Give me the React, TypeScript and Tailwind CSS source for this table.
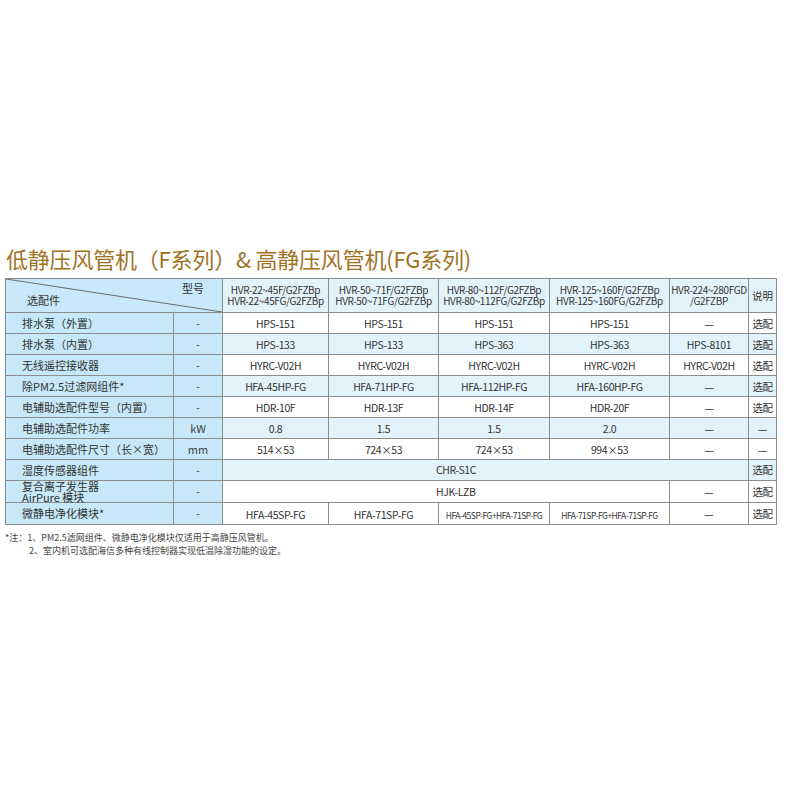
import React from 'react'

const font = { fontFamily: '"Noto Sans CJK SC", "Noto Sans", sans-serif' }

const models = [
  ['HVR-22~45F/G2FZBp', 'HVR-22~45FG/G2FZBp'],
  ['HVR-50~71F/G2FZBp', 'HVR-50~71FG/G2FZBp'],
  ['HVR-80~112F/G2FZBp', 'HVR-80~112FG/G2FZBp'],
  ['HVR-125~160F/G2FZBp', 'HVR-125~160FG/G2FZBp'],
  ['HVR-224~280FGD', '/G2FZBP'],
]

type Row = { name: React.ReactNode; unit: string; cells: string[]; note: string; tint: boolean }

const rows: Row[] = [
  { name: '排水泵（外置）', unit: '-', cells: ['HPS-151', 'HPS-151', 'HPS-151', 'HPS-151', '—'], note: '选配', tint: false },
  { name: '排水泵（内置）', unit: '-', cells: ['HPS-133', 'HPS-133', 'HPS-363', 'HPS-363', 'HPS-8101'], note: '选配', tint: true },
  { name: '无线遥控接收器', unit: '-', cells: ['HYRC-V02H', 'HYRC-V02H', 'HYRC-V02H', 'HYRC-V02H', 'HYRC-V02H'], note: '选配', tint: false },
  { name: '除PM2.5过滤网组件*', unit: '-', cells: ['HFA-45HP-FG', 'HFA-71HP-FG', 'HFA-112HP-FG', 'HFA-160HP-FG', '—'], note: '选配', tint: true },
  { name: '电辅助选配件型号（内置）', unit: '-', cells: ['HDR-10F', 'HDR-13F', 'HDR-14F', 'HDR-20F', '—'], note: '选配', tint: false },
  { name: '电辅助选配件功率', unit: 'kW', cells: ['0.8', '1.5', '1.5', '2.0', '—'], note: '—', tint: true },
  { name: '电辅助选配件尺寸（长×宽）', unit: 'mm', cells: ['514×53', '724×53', '724×53', '994×53', '—'], note: '—', tint: false },
]

const bd = 'border border-[#8c8c8c]'
const blue = 'bg-[#c7e8f8]'
const light = 'bg-[#e3f3fb]'

function NameCells({ name, unit, h }: { name: React.ReactNode; unit: string; h: string }) {
  return (
    <>
      <td className={`${bd} ${blue} ${h} pl-[16px] text-left text-[11px] leading-[11px] text-[#333]`}>{name}</td>
      <td className={`${bd} ${blue} text-center text-[11px] text-[#444]`}>{unit}</td>
    </>
  )
}

export default function App() {
  return (
    <div className="w-[800px] h-[800px] bg-white pt-[243px] pl-[5px]" style={font}>
      <h1 className="text-[22px] leading-[30px] text-[#9f721f] pl-[1px] tracking-[-0.2px]">
        低静压风管机（F系列）& 高静压风管机(FG系列)
      </h1>
      <table className="mt-[5px] w-[771px] table-fixed border-collapse text-[#333]">
        <colgroup>
          <col className="w-[168px]" />
          <col className="w-[49px]" />
          <col className="w-[106px]" />
          <col className="w-[110px]" />
          <col className="w-[111px]" />
          <col className="w-[120px]" />
          <col className="w-[79px]" />
          <col className="w-[28px]" />
        </colgroup>
        <tbody>
          <tr className="h-[34px]">
            <td colSpan={2} className={`${bd} ${blue} relative p-0`}>
              <svg className="absolute inset-0 w-full h-full" preserveAspectRatio="none" viewBox="0 0 100 100">
                <line x1="0" y1="0" x2="100" y2="100" stroke="#6b6b6b" strokeWidth="1" vectorEffect="non-scaling-stroke" />
              </svg>
              <span className="absolute left-[21px] top-[15px] text-[11px] leading-[12px]">选配件</span>
              <span className="absolute left-[176px] top-[3px] text-[11px] leading-[12px]">型号</span>
            </td>
            {models.map((m, i) => (
              <td key={i} className={`${bd} ${light} text-center whitespace-nowrap text-[10px] leading-[10.5px] tracking-[-0.35px] text-[#333]`}>
                <div>{m[0]}</div>
                <div>{m[1]}</div>
              </td>
            ))}
            <td className={`${bd} ${light} text-center text-[10.5px]`}>说明</td>
          </tr>
          {rows.map((r, i) => (
            <tr key={i} className="h-[21px]">
              <NameCells name={r.name} unit={r.unit} h="h-[21px]" />
              {r.cells.map((c, j) => (
                <td key={j} className={`${bd} ${r.tint ? light : 'bg-white'} text-center text-[10.5px] leading-[11px] tracking-[-0.4px]`}>
                  {c}
                </td>
              ))}
              <td className={`${bd} ${r.tint ? light : 'bg-white'} text-center text-[10.5px] leading-[11px] tracking-[-0.5px]`}>{r.note}</td>
            </tr>
          ))}
          <tr className="h-[21px]">
            <NameCells name="湿度传感器组件" unit="-" h="h-[21px]" />
            <td colSpan={5} className={`${bd} ${light} pl-[213px] text-left text-[10.5px] tracking-[-0.4px]`}>CHR-S1C</td>
            <td className={`${bd} ${light} text-center text-[10.5px] tracking-[-0.5px]`}>选配</td>
          </tr>
          <tr className="h-[22px]">
            <NameCells
              name={
                <div className="leading-[10.5px]">
                  <div>复合离子发生器</div>
                  <div>AirPure 模块</div>
                </div>
              }
              unit="-"
              h="h-[22px]"
            />
            <td colSpan={4} className={`${bd} bg-white pl-[213px] text-left text-[10.5px] tracking-[-0.4px]`}>HJK-LZB</td>
            <td className={`${bd} bg-white text-center text-[10.5px]`}>—</td>
            <td className={`${bd} bg-white text-center text-[10.5px] tracking-[-0.5px]`}>选配</td>
          </tr>
          <tr className="h-[22px]">
            <NameCells name="微静电净化模块*" unit="-" h="h-[22px]" />
            <td className={`${bd} bg-white text-center text-[10.5px] tracking-[-0.4px] pt-[3px]`}>HFA-45SP-FG</td>
            <td className={`${bd} bg-white text-center text-[10.5px] tracking-[-0.4px] pt-[3px]`}>HFA-71SP-FG</td>
            <td className={`${bd} bg-white text-center text-[8.5px] tracking-[-0.5px] pt-[3px]`}>HFA-45SP-FG+HFA-71SP-FG</td>
            <td className={`${bd} bg-white text-center text-[8.5px] tracking-[-0.5px] pt-[3px]`}>HFA-71SP-FG+HFA-71SP-FG</td>
            <td className={`${bd} bg-white text-center text-[10.5px]`}>—</td>
            <td className={`${bd} bg-white text-center text-[10.5px] tracking-[-0.5px]`}>选配</td>
          </tr>
        </tbody>
      </table>
      <div className="mt-[6px] text-[9px] leading-[13px] text-[#444]">
        <div>*注：1、PM2.5滤网组件、微静电净化模块仅适用于高静压风管机。</div>
        <div className="pl-[24px]">2、室内机可选配海信多种有线控制器实现低温除湿功能的设定。</div>
      </div>
    </div>
  )
}
